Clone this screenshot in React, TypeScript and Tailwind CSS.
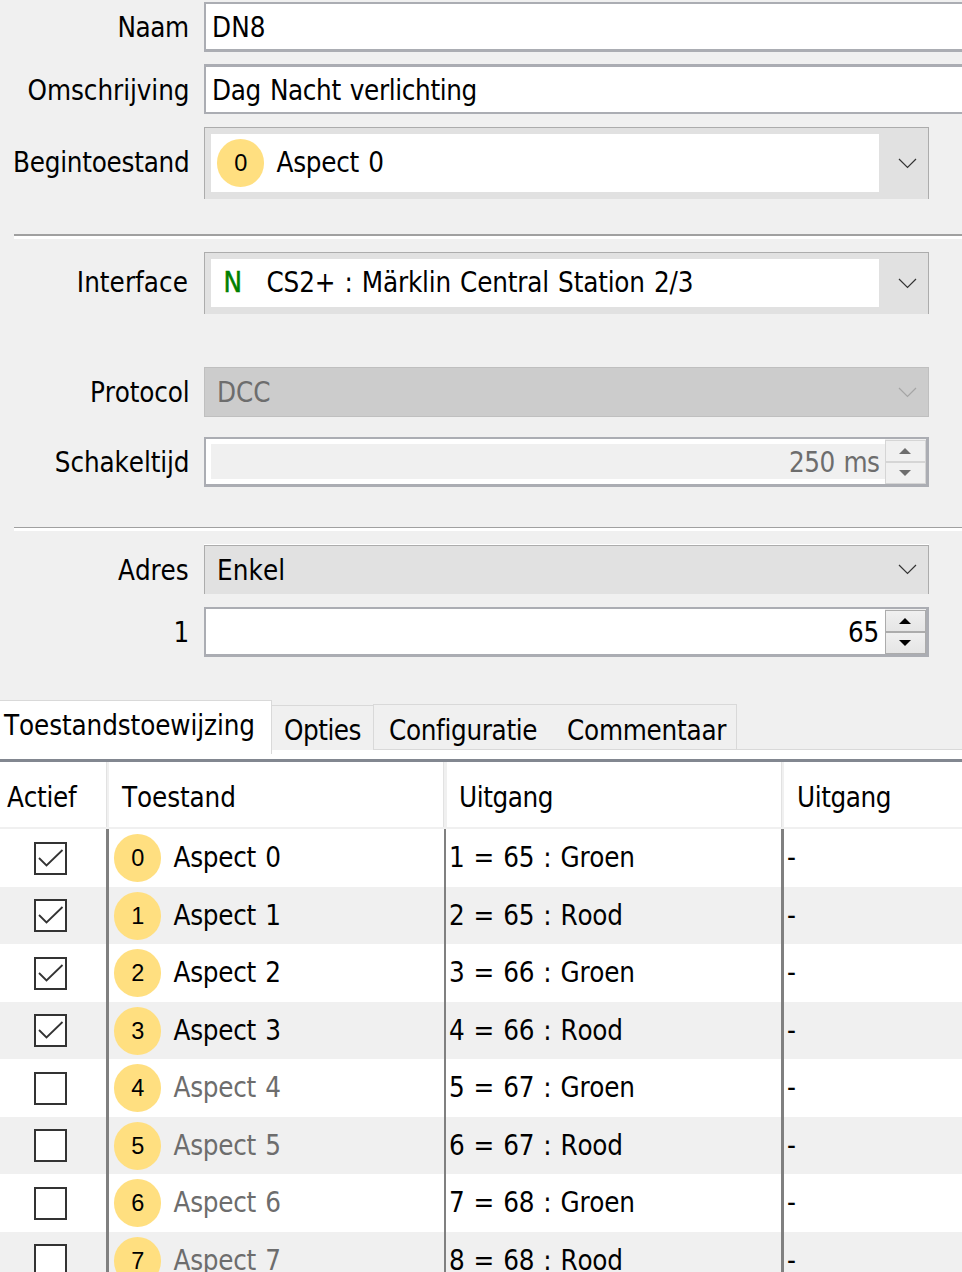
import { ReactNode } from "react";

function Chevron({ color, className = "" }: { color: string; className?: string }) {
  return (
    <svg className={`ml-[18.5px] h-[11px] w-[19px] shrink-0 ${className}`} viewBox="0 0 19 11" fill="none">
      <path d="M1 1L9.5 9.5L18 1" stroke={color} strokeWidth="1.2" />
    </svg>
  );
}

function Row({ label, track, pad = "pr-[14.5px]", mt, labelTop, children }: { label: string; track: string; pad?: string; mt: string; labelTop: string; children: ReactNode }) {
  return (
    <div className={`flex items-start ${mt}`}>
      <div className={`w-[204px] shrink-0 text-right ${pad} ${labelTop} ${track}`}>{label}</div>
      {children}
    </div>
  );
}

function Badge({ n }: { n: number }) {
  return (
    <div className="mr-[0.5px] h-[47.5px] w-[47px] shrink-0 rounded-full bg-[#ffdf80] pt-[11px] pl-[0.5px] text-center font-['Liberation_Sans',sans-serif] text-[23.5px] leading-[26px]">
      {n}
    </div>
  );
}

function Spinner({ disabled = false }: { disabled?: boolean }) {
  const fill = disabled ? "#6d6d6d" : "#000";
  const box = disabled
    ? "border-[#d5d5d5] bg-[#f0f0f0]"
    : "border-[#acacac] bg-linear-to-b from-[#f0f0f0] to-[#e5e5e5]";
  return (
    <div className="flex w-[41px] flex-col bg-[#f0f0f0] pt-px">
      <div className={`flex h-[22px] justify-center border pt-[7px] pr-px ${box}`}>
        <svg className="h-[6px] w-[12px]" viewBox="0 0 12 6"><path d="M0 6L6 0L12 6Z" fill={fill} /></svg>
      </div>
      <div className={`flex h-[22px] justify-center border pt-[7px] pr-px ${box}`}>
        <svg className="h-[6px] w-[12px]" viewBox="0 0 12 6"><path d="M0 0L6 6L12 0Z" fill={fill} /></svg>
      </div>
    </div>
  );
}

const rows = [
  { n: 0, on: true, out: "1 = 65 : Groen" },
  { n: 1, on: true, out: "2 = 65 : Rood" },
  { n: 2, on: true, out: "3 = 66 : Groen" },
  { n: 3, on: true, out: "4 = 66 : Rood" },
  { n: 4, on: false, out: "5 = 67 : Groen" },
  { n: 5, on: false, out: "6 = 67 : Rood" },
  { n: 6, on: false, out: "7 = 68 : Groen" },
  { n: 7, on: false, out: "8 = 68 : Rood" },
];

export default function App() {
  return (
    <div className="h-[1272px] w-[962px] overflow-hidden bg-[#f0f0f0] font-['DejaVu_Sans_Condensed','DejaVu_Sans',sans-serif] text-[27.5px] leading-[41px] tracking-[-0.25px] [font-kerning:none] [font-stretch:condensed] [word-spacing:1.5px] whitespace-pre text-black">
      <div className="flex h-[700px] flex-col">
        <Row label="Naam" track="tracking-[-0.5px]" pad="pr-[15.5px]" mt="mt-[2px]" labelTop="pt-[5px]">
          <div className="h-[50px] grow border-t-2 border-b-3 border-l-2 border-[#abadb3] bg-white pt-[3px] pl-[6px] tracking-[0.1px]">DN8</div>
        </Row>
        <Row label="Omschrijving" track="tracking-[-0.05px]" mt="mt-[12px]" labelTop="pt-[6px]">
          <div className="h-[50px] grow border-t-3 border-b-2 border-l-2 border-[#abadb3] bg-white pt-[3px] pl-[6px] tracking-[-0.35px]">Dag Nacht verlichting</div>
        </Row>
        <Row label="Begintoestand" track="" mt="mt-[13px]" labelTop="pt-[15px]">
          <div className="flex h-[72px] w-[725px] border border-b-0 border-[#acacac] bg-[#e1e1e1] pt-[6px] pl-[6px]">
            <div className="flex h-[58px] w-[668px] bg-white pt-[5px] pl-[6px]">
              <Badge n={0} />
              <span className="ml-[12px] pt-[3px]">Aspect 0</span>
            </div>
            <Chevron color="#333" className="mt-[24px]" />
          </div>
        </Row>
        <div className="mt-[35px] ml-[14px] h-[5px] border-t-2 border-[#a0a0a0] bg-white" />
        <Row label="Interface" track="tracking-[0.05px]" pad="pr-[16px]" mt="mt-[13px]" labelTop="pt-[10px]">
          <div className="flex h-[62px] w-[725px] border border-b-0 border-[#acacac] bg-[#e1e1e1] pt-[6px] pl-[6px]">
            <div className="flex h-[48px] w-[668px] bg-white pt-[3px] pl-[12.5px]">
              <span className="w-[43px] text-[#008000] [-webkit-text-stroke:0.5px_#008000]">N</span>
              <span className="tracking-[-0.18px]">CS2+ : Märklin Central Station 2/3</span>
            </div>
            <Chevron color="#333" className="mt-[19px]" />
          </div>
        </Row>
        <Row label="Protocol" track="tracking-[-0.15px]" mt="mt-[53px]" labelTop="pt-[5px]">
          <div className="flex h-[50px] w-[725px] border border-[#bfbfbf] bg-[#cccccc] pl-[12px] text-[#6d6d6d]">
            <span className="w-[662px] pt-[4px] tracking-[0px]">DCC</span>
            <Chevron color="#a5a5a5" className="mt-[19px]" />
          </div>
        </Row>
        <Row label="Schakeltijd" track="tracking-[-0.1px]" mt="mt-[20px]" labelTop="pt-[5px]">
          <div className="flex h-[50px] w-[725px] border-t-2 border-r-3 border-b-3 border-l-2 border-[#abadb3] bg-white text-[#6d6d6d]">
            <div className="w-[679px] py-[5px] pl-[5px]">
              <div className="h-[35px] bg-[#f0f0f0] pr-[5.5px] text-right leading-[37px] tracking-[-0.5px]">250 ms</div>
            </div>
            <Spinner disabled />
          </div>
        </Row>
        <div className="mt-[40px] ml-[14px] h-[4px] border-t border-[#a0a0a0] bg-white" />
        <Row label="Adres" track="tracking-[-0.1px]" pad="pr-[15.5px]" mt="mt-[13px]" labelTop="pt-[6px]">
          <div className="w-[725px] border-t border-white">
            <div className="flex h-[49px] border border-b-0 border-[#acacac] bg-[#e1e1e1] pl-[12px]">
              <span className="w-[662px] pt-[4px] tracking-[0.1px]">Enkel</span>
              <Chevron color="#333" className="mt-[18px]" />
            </div>
          </div>
        </Row>
        <Row label="1" track="" pad="pr-[15px]" mt="mt-[13px]" labelTop="pt-[5px]">
          <div className="flex h-[50px] w-[725px] border-t-2 border-r-3 border-b-3 border-l-2 border-[#abadb3] bg-white">
            <div className="w-[679px] pt-[3px] pr-[6px] text-right">65</div>
            <Spinner />
          </div>
        </Row>
      </div>

      <div className="flex h-[59px] items-start bg-linear-to-b from-[#f0f0f0] from-[50px] to-white to-[50px]">
        <div className="h-[59px] w-[272px] bg-white">
          <div className="h-[54px] border-t border-r border-[#d9d9d9] pt-[4px] pl-[4px] tracking-[-0.1px]">Toestandstoewijzing</div>
        </div>
        <div className="mt-[5px] h-[45px] w-[101px] border-t border-[#d9d9d9] pt-[4px] pl-[12px] tracking-[-0.5px]">Opties</div>
        <div className="mt-[4px] flex h-[46px] w-[364px] border border-[#d9d9d9] pt-[5px] pl-[15px]">
          <span className="w-[178px] tracking-[-0.33px]">Configuratie</span>
          <span>Commentaar</span>
        </div>
        <div className="h-[50px] grow border-b border-[#d9d9d9]" />
      </div>

      <div className="border-t-3 border-[#828790] bg-white">
        <div className="flex h-[67px] border-b-2 border-[#f0f0f0]">
          <div className="w-[106px] pt-[15px] pl-[7px]">Actief</div>
          <div className="w-[3px] border-l border-[#e2e2e2] bg-[#f0f0f0]" />
          <div className="w-[334px] pt-[15px] pl-[13px] tracking-[-0.1px]">Toestand</div>
          <div className="w-[4px] border-l border-[#e2e2e2] bg-[#f0f0f0]" />
          <div className="w-[334px] pt-[15px] pl-[12px] tracking-[-0.4px]">Uitgang</div>
          <div className="w-[3px] border-l border-[#e2e2e2] bg-[#f0f0f0]" />
          <div className="grow pt-[15px] pl-[13px] tracking-[-0.4px]">Uitgang</div>
        </div>
        {rows.map(({ n, on, out }) => (
          <div key={n} className={`flex ${n % 2 ? "h-[57px] bg-[#f0f0f0]" : "h-[58px] bg-white"}`}>
            <div className={`w-[106px] shrink-0 pl-[34px] ${n % 2 ? "pt-[12px]" : "pt-[13px]"}`}>
              <div className="h-[33px] w-[33px] border-2 border-[#333] bg-white">
                {on && (
                  <svg className="h-[29px] w-[29px]" viewBox="0 0 29 29" fill="none">
                    <path d="M3 14L10.5 21.5L26.5 6" stroke="#333" strokeWidth="1.8" />
                  </svg>
                )}
              </div>
            </div>
            <div className="w-[3px] shrink-0 bg-[#808080]" />
            <div className="flex w-[335px] shrink-0 pt-[5.3px] pl-[5px]">
              <Badge n={n} />
              <span className={`ml-[12px] pt-[2.7px] ${on ? "" : "text-[#6d6d6d]"}`}>Aspect {n}</span>
            </div>
            <div className="w-[2px] shrink-0 bg-[#808080]" />
            <div className="w-[335px] shrink-0 pt-[8px] pl-[3px]">{out}</div>
            <div className="w-[3px] shrink-0 bg-[#808080]" />
            <div className="grow pt-[8px] pl-[3px]">-</div>
          </div>
        ))}
      </div>
    </div>
  );
}
